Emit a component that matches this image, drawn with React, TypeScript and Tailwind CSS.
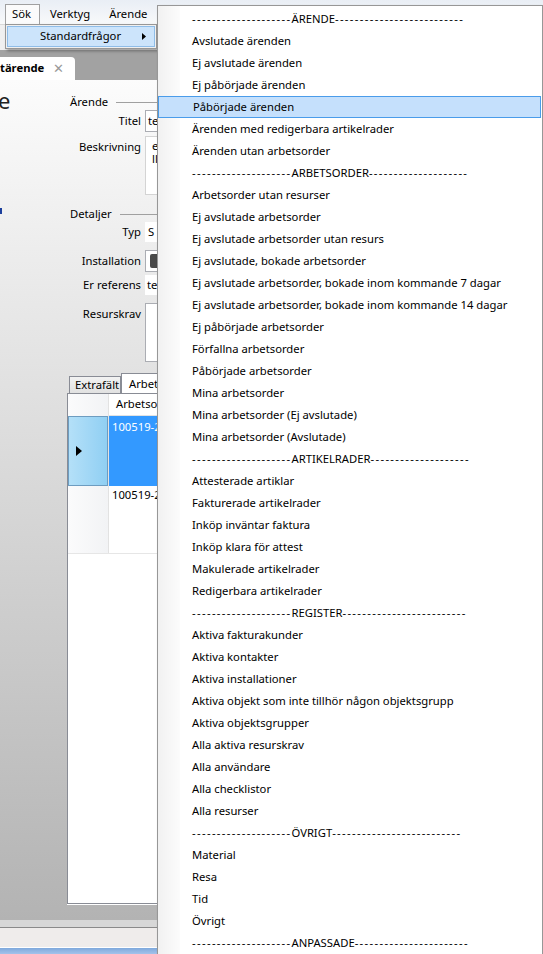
import { ReactNode } from "react";

type MenuEntry = { label: string } | { head: string; right: number };

const DASH20 = "--------------------";

const MENU: MenuEntry[] = [
  { head: "ÄRENDE", right: 26 },
  { label: "Avslutade ärenden" },
  { label: "Ej avslutade ärenden" },
  { label: "Ej påbörjade ärenden" },
  { label: "Påbörjade ärenden" },
  { label: "Ärenden med redigerbara artikelrader" },
  { label: "Ärenden utan arbetsorder" },
  { head: "ARBETSORDER", right: 20 },
  { label: "Arbetsorder utan resurser" },
  { label: "Ej avslutade arbetsorder" },
  { label: "Ej avslutade arbetsorder utan resurs" },
  { label: "Ej avslutade, bokade arbetsorder" },
  { label: "Ej avslutade arbetsorder, bokade inom kommande 7 dagar" },
  { label: "Ej avslutade arbetsorder, bokade inom kommande 14 dagar" },
  { label: "Ej påbörjade arbetsorder" },
  { label: "Förfallna arbetsorder" },
  { label: "Påbörjade arbetsorder" },
  { label: "Mina arbetsorder" },
  { label: "Mina arbetsorder (Ej avslutade)" },
  { label: "Mina arbetsorder (Avslutade)" },
  { head: "ARTIKELRADER", right: 20 },
  { label: "Attesterade artiklar" },
  { label: "Fakturerade artikelrader" },
  { label: "Inköp inväntar faktura" },
  { label: "Inköp klara för attest" },
  { label: "Makulerade artikelrader" },
  { label: "Redigerbara artikelrader" },
  { head: "REGISTER", right: 25 },
  { label: "Aktiva fakturakunder" },
  { label: "Aktiva kontakter" },
  { label: "Aktiva installationer" },
  { label: "Aktiva objekt som inte tillhör någon objektsgrupp" },
  { label: "Aktiva objektsgrupper" },
  { label: "Alla aktiva resurskrav" },
  { label: "Alla användare" },
  { label: "Alla checklistor" },
  { label: "Alla resurser" },
  { head: "ÖVRIGT", right: 26 },
  { label: "Material" },
  { label: "Resa" },
  { label: "Tid" },
  { label: "Övrigt" },
  { head: "ANPASSADE", right: 23 },
];

const HOVER_INDEX = 4;

function Dashes({ n }: { n: number }) {
  return <span className="tracking-[1.35px]">{"-".repeat(n)}</span>;
}

function FieldRow({
  label,
  top = false,
  className,
  children,
}: {
  label: string;
  top?: boolean;
  className: string;
  children: ReactNode;
}) {
  return (
    <div className={`flex gap-[4px] ${top ? "items-start" : "items-center"} ${className}`}>
      <div className={`w-[74px] shrink-0 text-right ${top ? "pt-[3px]" : ""}`}>{label}</div>
      {children}
    </div>
  );
}

function GroupHead({ title, className }: { title: string; className: string }) {
  return (
    <div className={`flex h-[14px] items-center pl-[3px] ${className}`}>
      <span>{title}</span>
      <div className="ml-[8px] h-px flex-1 bg-[#a0a0a0]" />
    </div>
  );
}

export default function App() {
  return (
    <div className="relative h-[954px] w-[543px] overflow-hidden bg-white font-['Noto_Sans',sans-serif] text-[11.25px] text-black">
      {/* background application window */}
      <div className="flex h-full flex-col">
        {/* menu bar */}
        <div className="flex h-[24px] items-end bg-gradient-to-b from-[#e9eef5] to-[#f8f9fa] pl-[5px]">
          <div className="flex h-[20px] w-[35px] items-center border border-b-0 border-[#a0a0a0] bg-[#fbfbfb] pl-[6px]">
            Sök
          </div>
          <div className="flex h-[20px] items-center pl-[10px]">Verktyg</div>
          <div className="flex h-[20px] items-center pl-[19px]">Ärende</div>
        </div>
        <div className="h-[26px] border-t border-[#d8d8d8] bg-[#f0f0f0]" />

        {/* document tab strip */}
        <div className="flex h-[30px] items-end bg-[#a2a2a2]">
          <div className="flex h-[23px] w-[75px] items-center rounded-tr-[4px] bg-white">
            <span className="font-bold">tärende</span>
            <span className="ml-[9px] text-[13px] leading-none text-[#9a9a9a]">✕</span>
          </div>
        </div>

        {/* form area */}
        <div className="flex flex-1 bg-gradient-to-b from-[#fcfcfc] to-[#b3b3b3]">
          <div className="relative w-[67px] shrink-0">
            <div className="-ml-[2px] mt-[5px] text-[22px] leading-[30px] text-[#222]">e</div>
            <div className="ml-0 mt-[93px] h-[6px] w-[2px] bg-[#1c3f9c]" />
          </div>

          <div className="flex flex-1 flex-col">
            <GroupHead title="Ärende" className="mt-[15px]" />
            <FieldRow label="Titel" className="mt-[1px] h-[22px]">
              <div className="flex h-[22px] w-[300px] items-center border border-[#abadb3] bg-white pl-[2px]">
                te
              </div>
            </FieldRow>
            <FieldRow label="Beskrivning" top className="mt-[4px]">
              <div className="h-[59px] w-[300px] border border-[#d4d4d4] bg-white pl-[6px] pt-[2px] leading-[13px]">
                e
                <br />
                ll
              </div>
            </FieldRow>

            <GroupHead title="Detaljer" className="mt-[12px]" />
            <FieldRow label="Typ" className="mt-[1px] h-[20px]">
              <div className="flex h-[20px] w-[300px] items-center bg-white pl-[3px]">S</div>
            </FieldRow>
            <FieldRow label="Installation" className="mt-[8px] h-[22px]">
              <div className="flex h-[22px] w-[300px] items-center border border-[#abadb3] bg-white pl-[4px]">
                <div className="h-[14px] w-[10px] rounded-[2px] bg-[#4a4a4a]" />
              </div>
            </FieldRow>
            <FieldRow label="Er referens" className="mt-[3px] h-[20px]">
              <div className="flex h-[20px] w-[300px] items-center bg-white pl-[2px]">te</div>
            </FieldRow>
            <FieldRow label="Resurskrav" top className="mt-[8px]">
              <div className="h-[59px] w-[300px] border border-[#abadb3] bg-white" />
            </FieldRow>

            {/* tab control */}
            <div className="mt-[11px] flex h-[20px] items-end pl-[2px]">
              <div className="flex h-[17px] w-[52px] items-center border border-b-0 border-[#898c95] bg-gradient-to-b from-[#f2f2f2] to-[#e1e1e1] pl-[5px]">
                Extrafält
              </div>
              <div className="-mb-px flex h-[21px] w-[100px] items-center border border-b-0 border-[#898c95] bg-white pl-[7px]">
                Arbetsorder
              </div>
            </div>
            <div className="mb-[16px] flex flex-1 flex-col border-b border-l border-t border-[#898c95] bg-white shadow-[0_1px_0_#fff]">
              <div className="flex">
                {/* row headers */}
                <div className="flex w-[41px] shrink-0 flex-col border-r border-[#e2e2e2] bg-gradient-to-r from-[#fbfbfc] to-[#f2f3f5]">
                  <div className="h-[22px]" />
                  <div className="flex h-[70px] items-center border border-[#6d9cc0] bg-gradient-to-r from-[#b4e0f8] to-[#90cff3] pl-[7px]">
                    <svg width="6" height="10" viewBox="0 0 6 10">
                      <path d="M0 0 L6 5 L0 10 Z" fill="#000" />
                    </svg>
                  </div>
                  <div className="h-[67px]" />
                </div>
                <div className="flex flex-1 flex-col">
                  <div className="flex h-[22px] items-center border-b border-[#e2e2e2] pl-[7px]">Arbetsorder</div>
                  <div className="h-[70px] bg-[#3399ff] pl-[3px] pt-[3px] text-white">100519-2</div>
                  <div className="h-[67px] pl-[3px] pt-[1px]">100519-2</div>
                </div>
              </div>
              <div className="h-px bg-[#e6e6e6]" />
            </div>
          </div>
        </div>

        {/* status area */}
        <div className="h-[7px] bg-[#d7d7d7]" />
        <div className="h-px bg-[#8a8a8a]" />
        <div className="h-[19px] bg-[#efeceb]" />
        <div className="h-px bg-white" />
        <div className="h-[6px] bg-gradient-to-b from-[#7fa9dc] to-[#a3c2ea]" />
      </div>

      {/* "Sök" dropdown */}
      <div className="absolute left-[5px] top-[24px] h-[25px] w-[152px] border border-[#979797] bg-[#f0f0f0] p-px shadow-[2px_2px_3px_rgba(0,0,0,0.35)]">
        <div className="flex h-[21px] items-center border border-[#8fbde8] bg-[#cce4fb] pl-[32px] pr-[8px]">
          <span className="flex-1">Standardfrågor</span>
          <svg width="4" height="7" viewBox="0 0 4 7">
            <path d="M0 0 L4 3.5 L0 7 Z" fill="#000" />
          </svg>
        </div>
      </div>

      {/* Standardfrågor submenu */}
      <div className="absolute left-[157px] top-[5px] h-[960px] w-[386px] border border-b-0 border-[#979797] bg-white pt-[2px] shadow-[2px_2px_3px_rgba(0,0,0,0.3)]">
        <div className="absolute bottom-0 left-0 top-0 w-[22px] bg-gradient-to-r from-[#f1f1f1] to-[#fcfcfc]" />
        <div className="relative flex flex-col">
          {MENU.map((m, i) => (
            <div
              key={i}
              className={`flex h-[22px] items-center whitespace-nowrap pl-[34px] ${
                i === HOVER_INDEX ? "mr-px border border-[#4a9cea] bg-[#c5e0fc] pl-[33px]" : ""
              }`}
            >
              {"head" in m ? (
                <span>
                  <Dashes n={DASH20.length} />
                  {m.head}
                  <Dashes n={m.right} />
                </span>
              ) : (
                m.label
              )}
            </div>
          ))}
        </div>
      </div>
    </div>
  );
}
